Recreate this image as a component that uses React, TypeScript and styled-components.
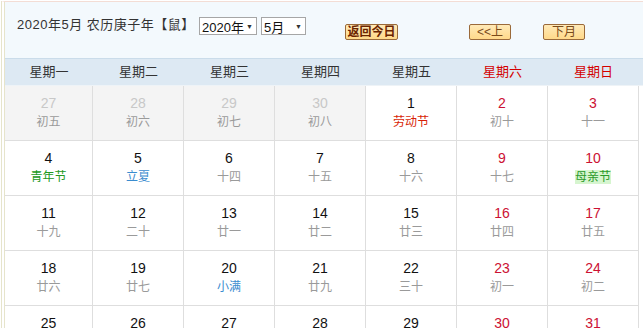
import React from "react";
import styled, { createGlobalStyle } from "styled-components";

const Global = createGlobalStyle`
  html, body { margin: 0; padding: 0; background: #fff; }
  body { font-family: "Liberation Sans", "Noto Sans CJK SC", sans-serif; overflow: hidden; }
`;

const Frame = styled.div`
  width: 641px;
  margin: 1px 0 0 1px;
  border-top: 1px solid #f3ddd5;
  border-left: 4px double #e6e4cb;
  border-right: 1px solid #dfe6ea;
`;

const Header = styled.div`
  height: 56px;
  background: #f3f9fd;
  display: flex;
  align-items: flex-start;
  padding-left: 12px;
  box-sizing: border-box;
`;

const Title = styled.div`
  margin-top: 14px;
  font-size: 13px;
  line-height: 18px;
  letter-spacing: 0.5px;
  color: #333;
  white-space: nowrap;
  width: 182px;
`;

const SelectBox = styled.div<{ $w: number; $ml: number }>`
  margin-top: 15px;
  margin-left: ${(p) => p.$ml}px;
  width: ${(p) => p.$w}px;
  height: 18px;
  box-sizing: border-box;
  border: 1px solid #a6a6a6;
  background: #fff;
  display: flex;
  align-items: center;
  justify-content: space-between;
  padding: 0 3px 0 2px;
  font-size: 13px;
  color: #111;
  white-space: nowrap;
  overflow: hidden;
`;

const Arrow = styled.span`
  font-size: 7px;
  color: #333;
  line-height: 1;
`;

const Btn = styled.div<{ $w: number; $ml: number; $bold?: boolean }>`
  margin-top: 22px;
  margin-left: ${(p) => p.$ml}px;
  width: ${(p) => p.$w}px;
  height: 16px;
  box-sizing: border-box;
  border: 1px solid #9a6a3a;
  border-radius: 2px;
  background: linear-gradient(#ffeab8, #ffd98a);
  color: ${(p) => (p.$bold ? "#6a2400" : "#7a4a1a")};
  font-weight: ${(p) => (p.$bold ? "bold" : "normal")};
  font-size: 12px;
  line-height: 14px;
  text-align: center;
  white-space: nowrap;
`;

const Cols = styled.div`
  display: grid;
  grid-template-columns: 88px repeat(6, 91px);
`;

const WeekRow = styled(Cols)`
  height: 26px;
  background: #dde9f3;
  border-top: 1px solid #cadcea;
  border-bottom: 1px solid #eef3f7;
`;

const WeekCell = styled.div<{ $red?: boolean }>`
  font-size: 13px;
  line-height: 26px;
  text-align: center;
  color: ${(p) => (p.$red ? "#d40000" : "#333")};
`;

const DayGrid = styled(Cols)``;

const DayCell = styled.div<{ $other?: boolean }>`
  height: 55px;
  box-sizing: border-box;
  border-right: 1px solid #dedede;
  border-bottom: 1px solid #dedede;
  background: ${(p) => (p.$other ? "#f4f4f4" : "#fff")};
  text-align: center;
  padding-top: 8px;
`;

const Num = styled.div<{ $tone: "other" | "red" | "normal" }>`
  font-size: 14px;
  line-height: 18px;
  color: ${(p) => (p.$tone === "other" ? "#c8c8c8" : p.$tone === "red" ? "#cc1133" : "#111")};
`;

const toneColor: Record<string, string> = {
  gray: "#9a9a9a",
  red: "#d81e06",
  green: "#229922",
  blue: "#3a8ccf",
  mom: "#2a9a2a",
};

const Lunar = styled.div<{ $tone: string; $hl?: boolean }>`
  font-size: 12px;
  line-height: 20px;
  color: ${(p) => toneColor[p.$tone]};
  span {
    background: ${(p) => (p.$hl ? "#d6f5cf" : "transparent")};
  }
`;

type Day = { n: number; l: string; other?: boolean; tone?: string; hl?: boolean };

const days: Day[] = [
  { n: 27, l: "初五", other: true },
  { n: 28, l: "初六", other: true },
  { n: 29, l: "初七", other: true },
  { n: 30, l: "初八", other: true },
  { n: 1, l: "劳动节", tone: "red" },
  { n: 2, l: "初十" },
  { n: 3, l: "十一" },
  { n: 4, l: "青年节", tone: "green" },
  { n: 5, l: "立夏", tone: "blue" },
  { n: 6, l: "十四" },
  { n: 7, l: "十五" },
  { n: 8, l: "十六" },
  { n: 9, l: "十七" },
  { n: 10, l: "母亲节", tone: "mom", hl: true },
  { n: 11, l: "十九" },
  { n: 12, l: "二十" },
  { n: 13, l: "廿一" },
  { n: 14, l: "廿二" },
  { n: 15, l: "廿三" },
  { n: 16, l: "廿四" },
  { n: 17, l: "廿五" },
  { n: 18, l: "廿六" },
  { n: 19, l: "廿七" },
  { n: 20, l: "小满", tone: "blue" },
  { n: 21, l: "廿九" },
  { n: 22, l: "三十" },
  { n: 23, l: "初一" },
  { n: 24, l: "初二" },
  { n: 25, l: "初三" },
  { n: 26, l: "初四" },
  { n: 27, l: "初五" },
  { n: 28, l: "初六" },
  { n: 29, l: "初七" },
  { n: 30, l: "初八" },
  { n: 31, l: "初九" },
];

const weekNames = ["星期一", "星期二", "星期三", "星期四", "星期五", "星期六", "星期日"];

export default function App() {
  return (
    <>
      <Global />
      <Frame>
        <Header>
          <Title>2020年5月 农历庚子年【鼠】</Title>
          <SelectBox $w={58} $ml={0}>
            <span>2020年</span>
            <Arrow>▼</Arrow>
          </SelectBox>
          <SelectBox $w={45} $ml={4}>
            <span>5月</span>
            <Arrow>▼</Arrow>
          </SelectBox>
          <Btn $w={53} $ml={39} $bold>返回今日</Btn>
          <Btn $w={42} $ml={71}>&lt;&lt;上</Btn>
          <Btn $w={42} $ml={32}>下月</Btn>
        </Header>
        <WeekRow>
          {weekNames.map((w, i) => (
            <WeekCell key={w} $red={i >= 5}>{w}</WeekCell>
          ))}
        </WeekRow>
        <DayGrid>
          {days.map((d, i) => {
            const weekend = i % 7 >= 5;
            return (
              <DayCell key={i} $other={d.other}>
                <Num $tone={d.other ? "other" : weekend ? "red" : "normal"}>{d.n}</Num>
                <Lunar $tone={d.tone ?? "gray"} $hl={d.hl}>
                  <span>{d.l}</span>
                </Lunar>
              </DayCell>
            );
          })}
        </DayGrid>
      </Frame>
    </>
  );
}
